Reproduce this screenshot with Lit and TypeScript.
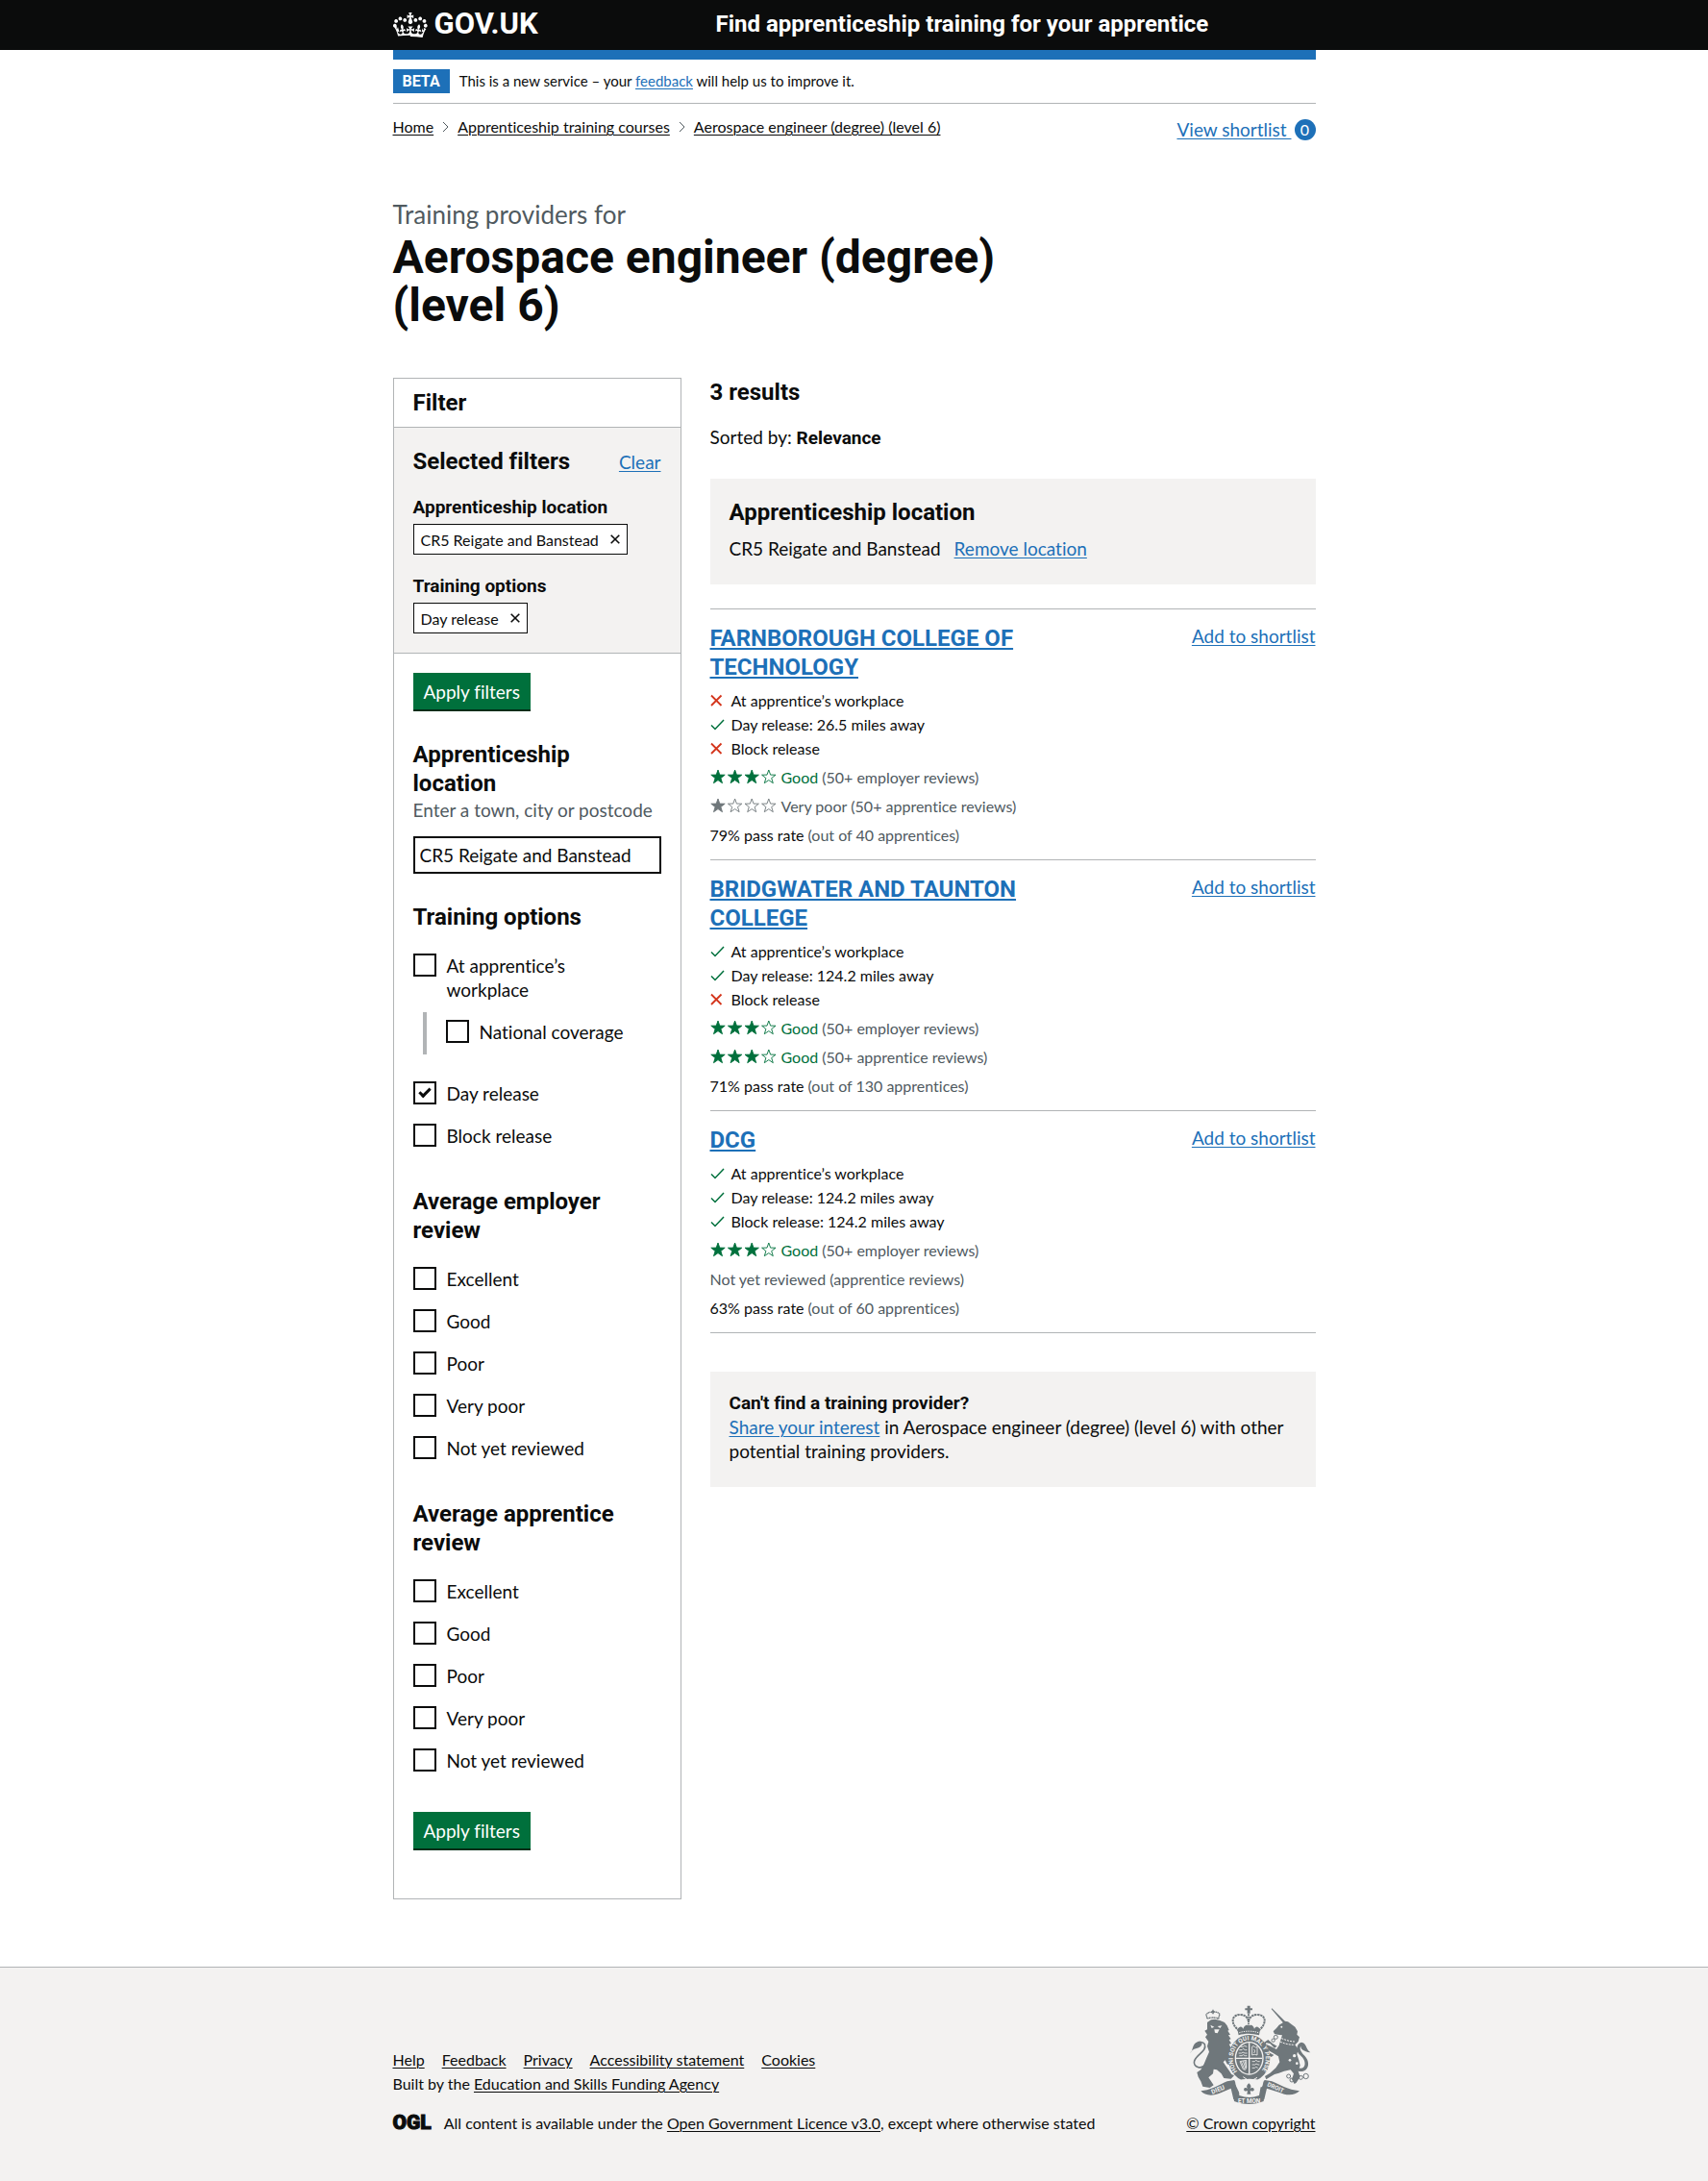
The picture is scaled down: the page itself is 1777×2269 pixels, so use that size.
import { LitElement, html, svg, css, nothing } from "lit";
import { customElement, property } from "lit/decorators.js";

const base = css`
  *,
  *::before,
  *::after {
    box-sizing: border-box;
  }
  :host {
    display: block;
    font-family: "Lato", "Liberation Sans", sans-serif;
    font-variant-ligatures: none;
    font-size: 19px;
    line-height: 25px;
    color: #0b0c0c;
  }
  h1,
  h2,
  h3,
  p,
  ul,
  ol,
  fieldset,
  legend {
    margin: 0;
    padding: 0;
    border: 0;
  }
  ul,
  ol {
    list-style: none;
  }
  a {
    color: #1d70b8;
    text-decoration: underline;
    text-decoration-thickness: 1px;
    text-underline-offset: 2px;
  }
  .heading-m,
  .heading-s {
    font-family: "Roboto", "Liberation Sans", sans-serif;
    font-weight: 700;
  }
  .heading-m {
    font-size: 24px;
    line-height: 30px;
  }
  .heading-s {
    font-size: 19px;
    line-height: 25px;
  }
  .container {
    max-width: 960px;
    margin: 0 auto;
  }
  .dark {
    color: #0b0c0c;
  }
`;

const tickIcon = svg`<path d="M1 7.5 L5 11.5 L14 2" fill="none" stroke="#00703c" stroke-width="1.5"/>`;
const crossIcon = svg`<path d="M1 1.5 L11.5 12 M11.5 1.5 L1 12" fill="none" stroke="#d4351c" stroke-width="1.8"/>`;

@customElement("site-header")
class SiteHeader extends LitElement {
  static styles = [
    base,
    css`
      .header {
        background: #0b0c0c;
        color: #fff;
        height: 52px;
        padding-top: 10px;
      }
      .row {
        display: grid;
        grid-template-columns: 35% 1fr;
      }
      .logo {
        display: flex;
        align-items: center;
        gap: 7px;
        height: 30px;
        color: #fff;
        text-decoration: none;
        font-family: "Roboto", "Liberation Sans", sans-serif;
        font-weight: 700;
        font-size: 31px;
        line-height: 30px;
      }
      .service {
        color: #fff;
        text-decoration: none;
      }
      .bar {
        height: 10px;
        background: #1d70b8;
      }
      .phase {
        display: flex;
        align-items: center;
        gap: 10px;
        padding: 10px 0;
        border-bottom: 1px solid #b1b4b6;
        font-size: 15px;
      }
      .tag {
        display: inline-block;
        background: #1d70b8;
        color: #fff;
        font-family: "Roboto", "Liberation Sans", sans-serif;
        font-weight: 700;
        font-size: 16px;
        line-height: 25px;
        padding: 0 10px;
      }
      .nav {
        display: flex;
        align-items: flex-start;
        justify-content: space-between;
        padding-top: 14px;
      }
      .crumbs {
        display: flex;
        font-size: 16px;
        line-height: 20px;
      }
      .crumbs li {
        display: flex;
        align-items: center;
      }
      .crumbs svg {
        margin: 0 9px;
      }
      .shortlist {
        display: flex;
        gap: 3px;
        align-items: center;
        text-decoration: none;
      }
      .shortlist .label {
        text-decoration: underline;
        text-decoration-thickness: 1px;
        text-underline-offset: 2px;
      }
      .count {
        width: 22px;
        height: 22px;
        border-radius: 50%;
        background: #1d70b8;
        color: #fff;
        font-size: 16px;
        line-height: 22px;
        text-align: center;
      }
    `,
  ];

  render() {
    const chevron = html`<svg width="7" height="12" viewBox="0 0 7 12" aria-hidden="true">
      <path d="M1 1 6 6 1 11" fill="none" stroke="#505a5f" />
    </svg>`;
    return html`
      <header class="header">
        <div class="container row">
          <a class="logo" href="#">
            <svg width="36" height="32" viewBox="0 0 36 32" fill="#fff" aria-hidden="true">
              <path
                d="M6.7 12.2c1 .4 2.1-.1 2.5-1s-.1-2.1-1-2.5c-1-.4-2.1.1-2.5 1-.4 1 0 2.1 1 2.5m-4.3 2.5c1 .4 2.1-.1 2.5-1 .4-1-.1-2.1-1-2.5-1-.4-2.1.1-2.5 1-.5 1 0 2.1 1 2.5m-1.3 4.8c1 .4 2.1-.1 2.5-1 .4-1-.1-2.1-1-2.5-1-.4-2.1.1-2.5 1-.4 1 0 2.1 1 2.5m10.4-5.8c1 .4 2.1-.1 2.5-1 .4-1-.1-2.1-1-2.5-1-.4-2.1.1-2.5 1s0 2.1 1 2.5m17.4-1.5c-1 .4-2.1-.1-2.5-1s.1-2.1 1-2.5c1-.4 2.1.1 2.5 1 .5 1 0 2.1-1 2.5m4.3 2.5c-1 .4-2.1-.1-2.5-1-.4-1 .1-2.1 1-2.5 1-.4 2.1.1 2.5 1 .5 1 0 2.1-1 2.5m1.3 4.8c-1 .4-2.1-.1-2.5-1-.4-1 .1-2.1 1-2.5 1-.4 2.1.1 2.5 1 .4 1 0 2.1-1 2.5m-10.4-5.8c-1 .4-2.1-.1-2.5-1s.1-2.1 1-2.5c1-.4 2.1.1 2.5 1s0 2.1-1 2.5m-5.3-4.9 2.4 1.3V6.5l-2.4.8c-.1-.1-.1-.2-.2-.3s1-3 1-3h-3.4l1 2.9c-.1.1-.2.2-.2.3l-2.4-.7v3.6L17 9l.2.2-1.4 4c-.1.2-.1.4-.1.6 0 1.1.8 2 1.9 2.2h.7c1-.2 1.9-1.1 1.9-2.1 0-.2 0-.4-.1-.6l-1.4-4c-.1-.2 0-.3.1-.5m-1 20.3c4.6 0 8.9.3 12.8.9 1.1-4.6 2.4-7.2 3.8-9.1l-2.6-.9c.3 1.3.3 1.9 0 2.8-.4-.4-.8-1.2-1.1-2.4l-1.2 4.2c.8-.5 1.4-.9 2-.9-1.2 2.6-2.7 3.2-3.6 3-1.2-.2-1.7-1.3-1.5-2.2.3-1.3 1.6-1.6 2.2-.1 1.2-2.4-.8-3.1-2.1-2.4 1.9-1.9 2.2-3.6.6-5.7-2.2 1.7-2.2 3.3-1.2 5.6-1.3-1.5-3.3-.7-2.5 1.7.9-1.4 2.1-.5 2 .8-.2 1.2-1.7 2.1-3.7 1.9-2.8-.2-3-2.2-3-3.8.7-.1 1.9.5 3 2l.4-4.4c-1.1 1.2-2.3 1.4-3.5 1.4.4-1.2 2.1-3.1 2.1-3.1h-5.4s1.8 1.9 2.1 3.1c-1.2 0-2.4-.2-3.5-1.4l.4 4.4c1.1-1.5 2.3-2.1 3-2-.1 1.6-.2 3.6-3 3.8-2 .2-3.5-.7-3.7-1.9-.1-1.3 1.1-2.2 2-.8.8-2.4-1.3-3.2-2.5-1.7 1-2.3 1-3.9-1.2-5.6-1.6 2-1.3 3.8.6 5.7-1.3-.7-3.2 0-2.1 2.4.6-1.5 1.9-1.1 2.2.1.2.9-.4 1.9-1.5 2.2-1 .2-2.5-.5-3.6-3 .6 0 1.2.4 2 .9L5 19c-.4 1.1-.7 1.9-1.1 2.4-.3-.9-.2-1.4 0-2.8l-2.6.9C2.7 21.4 4 24 5.1 28.6c4-.6 8.2-.9 12.8-.9"
              />
            </svg>
            <span>GOV.UK</span>
          </a>
          <a class="service heading-m" href="#">Find apprenticeship training for your apprentice</a>
        </div>
      </header>
      <div class="container">
        <div class="bar"></div>
        <div class="phase">
          <strong class="tag">BETA</strong>
          <span>This is a new service – your <a href="#">feedback</a> will help us to improve it.</span>
        </div>
        <nav class="nav" aria-label="Breadcrumb">
          <ol class="crumbs">
            <li><a class="dark" href="#">Home</a></li>
            <li>${chevron}<a class="dark" href="#">Apprenticeship training courses</a></li>
            <li>${chevron}<a class="dark" href="#">Aerospace engineer (degree) (level 6)</a></li>
          </ol>
          <a class="shortlist" href="#"><span class="label">View shortlist&nbsp;</span><span class="count">0</span></a>
        </nav>
      </div>
    `;
  }
}

interface Option {
  label: string;
  checked?: boolean;
  children?: Option[];
}

const ratings: Option[] = ["Excellent", "Good", "Poor", "Very poor", "Not yet reviewed"].map((label) => ({ label }));

const groups: { name: string; title: string; options: Option[] }[] = [
  {
    name: "training",
    title: "Training options",
    options: [
      { label: "At apprentice’s workplace", children: [{ label: "National coverage" }] },
      { label: "Day release", checked: true },
      { label: "Block release" },
    ],
  },
  { name: "employer", title: "Average employer review", options: ratings },
  { name: "apprentice", title: "Average apprentice review", options: ratings },
];

@customElement("filter-panel")
class FilterPanel extends LitElement {
  static styles = [
    base,
    css`
      .panel {
        border: 1px solid #b1b4b6;
      }
      .title {
        padding: 10px 20px;
      }
      .selected {
        display: flex;
        flex-direction: column;
        gap: 20px;
        padding: 20px;
        background: #f3f2f1;
        border-top: 1px solid #b1b4b6;
        border-bottom: 1px solid #b1b4b6;
      }
      .selected-head {
        display: flex;
        justify-content: space-between;
        align-items: baseline;
      }
      .chip {
        display: inline-flex;
        align-items: center;
        gap: 12px;
        height: 32px;
        margin-top: 5px;
        padding: 0 7px;
        border: 1px solid #0b0c0c;
        background: #fff;
        color: #0b0c0c;
        font-size: 16px;
        text-decoration: none;
      }
      .form {
        display: flex;
        flex-direction: column;
        align-items: flex-start;
        gap: 30px;
        padding: 20px 20px 50px;
      }
      .button {
        height: 38px;
        margin-bottom: 2px;
        padding: 0 11px;
        border: 0;
        background: #00703c;
        box-shadow: 0 2px 0 #002d18;
        color: #fff;
        font: inherit;
      }
      .field {
        align-self: stretch;
      }
      .hint {
        color: #505a5f;
        margin-bottom: 15px;
      }
      .text {
        display: block;
        width: 100%;
        height: 39px;
        padding: 5px;
        border: 2px solid #0b0c0c;
        border-radius: 0;
        font: inherit;
        color: inherit;
      }
      .legend {
        display: block;
        padding-right: 20px;
      }
      .options {
        padding-top: 15px;
      }
      .item {
        display: flex;
        align-items: flex-start;
        gap: 11px;
        padding: 8px 20px 7px 0;
        margin-bottom: 4px;
      }
      .box {
        appearance: none;
        flex: none;
        display: grid;
        place-items: center;
        width: 24px;
        height: 24px;
        margin: 0;
        border: 2px solid #0b0c0c;
        background: #fff;
      }
      .box:checked::before {
        content: "";
        width: 12px;
        height: 7px;
        margin-bottom: 4px;
        border: solid #0b0c0c;
        border-width: 0 0 3px 3px;
        rotate: -45deg;
      }
      .nested {
        margin: 0 0 20px 10px;
        padding-left: 20px;
        border-left: 4px solid #b1b4b6;
      }
      .nested .item {
        margin: 0;
        padding-bottom: 11px;
      }
    `,
  ];

  private option(group: string, o: Option): unknown {
    const id = `${group}-${o.label.toLowerCase().replace(/[^a-z]+/g, "-")}`;
    return html`
      <div class="item">
        <input class="box" type="checkbox" id=${id} ?checked=${o.checked} />
        <label for=${id}>${o.label}</label>
      </div>
      ${o.children ? html`<div class="nested">${o.children.map((c) => this.option(group, c))}</div>` : nothing}
    `;
  }

  private chip(title: string, value: string) {
    return html`<div>
      <h3 class="heading-s">${title}</h3>
      <a class="chip" href="#"
        >${value}<svg width="10" height="10" viewBox="0 0 10 10" aria-hidden="true">
          <path d="M.7 .7 9.3 9.3M9.3 .7 .7 9.3" stroke="#0b0c0c" stroke-width="1.6" /></svg
      ></a>
    </div>`;
  }

  render() {
    return html`
      <div class="panel">
        <h2 class="heading-m title">Filter</h2>
        <div class="selected">
          <div class="selected-head">
            <h2 class="heading-m">Selected filters</h2>
            <a href="#">Clear</a>
          </div>
          ${this.chip("Apprenticeship location", "CR5 Reigate and Banstead")}
          ${this.chip("Training options", "Day release")}
        </div>
        <form class="form">
          <button class="button" type="button">Apply filters</button>
          <div class="field">
            <label class="heading-m legend" for="location">Apprenticeship location</label>
            <p class="hint" id="hint">Enter a town, city or postcode</p>
            <input class="text" id="location" type="text" aria-describedby="hint" value="CR5 Reigate and Banstead" />
          </div>
          ${groups.map(
            (g) => html`<fieldset class="field">
              <legend class="heading-m legend">${g.title}</legend>
              <div class="options">${g.options.map((o) => this.option(g.name, o))}</div>
            </fieldset>`,
          )}
          <button class="button" type="button">Apply filters</button>
        </form>
      </div>
    `;
  }
}

interface Review {
  stars: number;
  text: string;
  by: string;
}
interface Provider {
  name: string;
  options: { ok: boolean; text: string }[];
  reviews: Review[];
  rate: string;
  outOf: number;
}

const employer: Review = { stars: 3, text: "Good", by: "employer" };
const providers: Provider[] = [
  {
    name: "FARNBOROUGH COLLEGE OF TECHNOLOGY",
    options: [
      { ok: false, text: "At apprentice’s workplace" },
      { ok: true, text: "Day release: 26.5 miles away" },
      { ok: false, text: "Block release" },
    ],
    reviews: [employer, { stars: 1, text: "Very poor", by: "apprentice" }],
    rate: "79%",
    outOf: 40,
  },
  {
    name: "BRIDGWATER AND TAUNTON COLLEGE",
    options: [
      { ok: true, text: "At apprentice’s workplace" },
      { ok: true, text: "Day release: 124.2 miles away" },
      { ok: false, text: "Block release" },
    ],
    reviews: [employer, { stars: 3, text: "Good", by: "apprentice" }],
    rate: "71%",
    outOf: 130,
  },
  {
    name: "DCG",
    options: [
      { ok: true, text: "At apprentice’s workplace" },
      { ok: true, text: "Day release: 124.2 miles away" },
      { ok: true, text: "Block release: 124.2 miles away" },
    ],
    reviews: [employer, { stars: 0, text: "Not yet reviewed", by: "apprentice" }],
    rate: "63%",
    outOf: 60,
  },
];

@customElement("provider-card")
class ProviderCard extends LitElement {
  @property({ attribute: false }) provider!: Provider;

  static styles = [
    base,
    css`
      .card {
        display: grid;
        grid-template-columns: 2fr 1fr;
        border-top: 1px solid #b1b4b6;
        padding: 15px 0 13px;
        font-size: 16px;
      }
      .name a {
        text-decoration-thickness: 2px;
      }
      .options {
        padding-top: 7px;
      }
      .options li {
        display: flex;
        align-items: center;
        gap: 7px;
      }
      .review {
        display: flex;
        align-items: center;
        margin-top: 5px;
        gap: 4px;
        color: #505a5f;
      }
      .good {
        color: #00703c;
      }
      .black {
        color: #0b0c0c;
      }
      .stars {
        margin-right: 1px;
      }
      .add {
        justify-self: end;
        align-self: start;
        font-size: 19px;
      }
    `,
  ];

  private stars(n: number) {
    const color = n > 2 ? "#00703c" : "#6f777b";
    return html`<svg class="stars" width="69" height="17" viewBox="0 0 69 17" aria-hidden="true">
      ${[0, 1, 2, 3].map(
        (i) =>
          svg`<path transform="translate(${i * 17.6} 0)" d="M8 1 9.8 6.1 15.2 6.2 10.9 9.5 12.5 14.7 8 11.6 3.5 14.7 5.1 9.5 .8 6.2 6.2 6.1Z" fill=${i < n ? color : "none"} stroke=${color} stroke-width=".9"/>`,
      )}
    </svg>`;
  }

  render() {
    const p = this.provider;
    return html`
      <article class="card">
        <div>
          <h2 class="heading-m name"><a href="#">${p.name}</a></h2>
          <ul class="options">
            ${p.options.map(
              (o) => html`<li>
                <svg width="15" height="14" viewBox="0 0 15 14" aria-hidden="true">${o.ok ? tickIcon : crossIcon}</svg>
                ${o.text}
              </li>`,
            )}
          </ul>
          ${p.reviews.map((r) =>
            r.stars
              ? html`<p class="review">
                  ${this.stars(r.stars)}<span class=${r.stars > 2 ? "good" : ""}>${r.text}</span>
                  <span>(50+ ${r.by} reviews)</span>
                </p>`
              : html`<p class="review">${r.text} (${r.by} reviews)</p>`,
          )}
          <p class="review"><span class="black">${p.rate} pass rate</span> <span>(out of ${p.outOf} apprentices)</span></p>
        </div>
        <a class="add" href="#">Add to shortlist</a>
      </article>
    `;
  }
}

@customElement("site-footer")
class SiteFooter extends LitElement {
  static styles = [
    base,
    css`
      .footer {
        background: #f3f2f1;
        border-top: 1px solid #b1b4b6;
        padding: 35px 0 48px;
        font-size: 16px;
      }
      .row {
        display: flex;
        justify-content: space-between;
        align-items: flex-end;
      }
      .links {
        display: flex;
        gap: 18px;
      }
      .licence {
        display: flex;
        gap: 13px;
        margin-top: 16px;
      }
      .ogl {
        font-family: "Roboto", "Liberation Sans", sans-serif;
        font-weight: 900;
        font-size: 21px;
        -webkit-text-stroke: 1px #0b0c0c;
      }
      .crown {
        display: flex;
        flex-direction: column;
        align-items: center;
        gap: 4px;
      }
    `,
  ];

  private arms() {
    const c = "#6f777b";
    const bg = "#f3f2f1";
    return html`<svg width="134" height="110" viewBox="0 0 402 330" fill=${c} aria-hidden="true">
      <!-- lion with tail and crown -->
      <path d="M66 66 L78 58 90 56 106 60 120 66 128 76 134 90 130 92 138 104 132 106 140 118 134 120 141 132 134 134 143 150 149 168 138 184 138 200 128 196 122 184 116 190 124 202 134 216 142 228 150 232 140 242 118 240 110 226 96 214 86 212 84 226 70 238 78 250 86 262 74 270 52 266 46 250 38 236 34 222 46 214 56 196 64 176 72 158 66 140 70 126 60 112 66 104 58 92 66 88Z" />
      <path d="M76 74 88 80 80 84ZM98 78 112 76 106 84ZM88 88 104 88 98 100 90 98Z" fill=${bg} />
      <path d="M62 196C48 216 20 204 26 186C34 164 66 156 58 134C52 124 36 126 32 136" fill="none" stroke=${c} stroke-width="5" />
      <path d="M12 162C22 156 18 140 30 130C44 118 56 130 46 140C40 148 22 144 12 162Z" />
      <path d="M66 54 63 42C68 34 76 32 84 36C92 30 102 36 105 40L101 54C90 50 78 50 66 54Z" fill="none" stroke=${c} stroke-width="4" stroke-dasharray="4 1" />
      <path d="M82 26h4v14h-4zM79 30h10v3h-10z" />
      <!-- unicorn with horn, mane and chain -->
      <path d="M268 22 310 64 304 68 266 24Z" />
      <path d="M300 68 308 62 318 64 326 70 340 80 348 94 346 104 354 112 350 126 340 136 350 150 346 166 352 184 356 200 350 218 356 236 344 254 338 258 330 244 336 226 326 214 306 218 290 224 276 228 262 236 250 244 246 234 262 224 280 208 292 190 288 172 272 162 258 154 248 142 250 134 266 142 282 150 290 138 296 118 300 106 286 104 276 102 272 94 282 84 290 74Z" />
      <path d="M262 132 250 130 248 138 244 128 256 120 270 132 284 140 276 146ZM266 174 254 168 246 174 242 166 256 158 274 168Z" />
      <path d="M346 206C372 220 380 188 358 170C340 156 344 132 360 128C376 130 372 146 388 160C366 156 358 150 358 140C352 148 360 160 370 170C394 196 376 226 350 218Z" />
      <circle cx="298" cy="80" r="3" fill=${bg} />
      <path d="M290 112 C306 120 324 126 340 126 M286 122C302 132 322 136 338 136" fill="none" stroke=${bg} stroke-width="3" stroke-dasharray="6 3" />
      <g fill=${bg}><circle cx="338" cy="170" r="5" /><circle cx="324" cy="184" r="4" /><circle cx="346" cy="194" r="4" /></g>
      <g fill="none" stroke=${c} stroke-width="3">
        <circle cx="320" cy="234" r="6" /><circle cx="330" cy="246" r="6" /><circle cx="358" cy="238" r="6" />
        <circle cx="374" cy="234" r="8" /><circle cx="280" cy="112" r="6" /><circle cx="272" cy="122" r="5" />
      </g>
      <!-- imperial crown -->
      <g fill="none" stroke=${c} stroke-width="6">
        <path d="M166 92C138 72 140 42 168 42C188 42 192 54 195 62C198 54 202 42 222 42C252 42 252 72 226 92" stroke-dasharray="7 2" />
        <path d="M195 40V86" stroke-dasharray="5 2" />
      </g>
      <path d="M191 14h9v8h7v6h-7v10h-9V28h-7v-6h7z" />
      <path d="M160 88C168 76 174 78 178 86C184 72 192 72 195 80C200 72 208 72 213 86C218 78 224 76 231 88L228 106C206 100 184 100 164 106Z" />
      <path d="M166 98C184 92 208 92 226 98" stroke=${bg} stroke-width="3" stroke-dasharray="4 3" fill="none" />
      <!-- garter and shield -->
      <ellipse cx="197" cy="178" rx="65" ry="73" />
      <ellipse cx="197" cy="178" rx="45" ry="52" fill=${bg} />
      <ellipse cx="197" cy="178" rx="41" ry="48" />
      <path d="M197 130V226M156 178H238" stroke=${bg} stroke-width="4" />
      <g fill="none" stroke=${bg} stroke-width="2.5">
        <path d="M166 152h8l4-4 6 4h6M164 162h9l4-3 6 3h8M170 142h8l4-3 8 3M166 170h8l4-3 6 3h6" />
        <path d="M206 142q4-5 8 0t8 0v26q-8-4-16 0zM212 150q6 5 0 12" />
        <path d="M168 188 188 184V208Q186 218 178 212ZM172 188 182 212M178 187 186 210M183 186 188 206" />
        <path d="M206 188h8l4-4 6 4h6M206 198h9l4-3 6 3h4M206 208h8l4-3 6 3" />
      </g>
      <path id="garter" d="M160 219A51 58 0 1 1 236 217" fill="none" />
      <text font-family="Roboto, sans-serif" font-weight="700" font-size="19" fill=${bg}>
        <textPath href="#garter">HONI SOIT QUI MAL Y PENSE</textPath>
      </text>
      <path d="M178 236 190 244M208 246 222 238" stroke=${bg} stroke-width="3" />
      <!-- motto ribbon -->
      <path d="M46 280C80 276 100 262 128 250L150 246C156 252 152 262 160 268L236 268C242 262 238 250 246 246L268 250C296 262 316 276 354 280C338 296 312 294 290 284L252 272L244 306C214 322 180 322 148 306L140 272L108 286C84 296 60 296 46 280Z" />
      <path d="M158 250C176 240 220 240 236 250L228 294C206 302 188 302 166 294C168 276 150 270 158 250Z" fill=${bg} />
      <path d="M148 292C180 306 214 306 244 292L242 312C214 324 178 324 150 312Z" />
      <path d="M196 256C206 264 202 270 199 274C206 266 214 270 212 278C208 282 202 280 200 280L202 290H190L192 280C190 280 184 282 181 278C178 270 186 266 193 274C190 270 186 264 196 256Z" />
      <g font-family="Roboto, sans-serif" font-weight="700" fill=${bg}>
        <text x="82" y="290" font-size="20" transform="rotate(-22 82 290)">DIEU</text>
        <text x="162" y="318" font-size="19">ET MON</text>
        <text x="252" y="264" font-size="19" transform="rotate(24 252 264)">DROIT</text>
      </g>
    </svg>`;
  }

  render() {
    return html`
      <footer class="footer">
        <div class="container row">
          <div>
            <ul class="links">
              ${["Help", "Feedback", "Privacy", "Accessibility statement", "Cookies"].map(
                (t) => html`<li><a class="dark" href="#">${t}</a></li>`,
              )}
            </ul>
            <p>Built by the <a class="dark" href="#">Education and Skills Funding Agency</a></p>
            <p class="licence">
              <span class="ogl">OGL</span>
              <span>All content is available under the <a class="dark" href="#">Open Government Licence v3.0</a>, except where otherwise stated</span>
            </p>
          </div>
          <div class="crown">${this.arms()}<a class="dark" href="#">© Crown copyright</a></div>
        </div>
      </footer>
    `;
  }
}

@customElement("app-root")
class AppRoot extends LitElement {
  static styles = [
    base,
    css`
      :host {
        background: #fff;
      }
      .intro {
        max-width: 640px;
        margin-top: 61px;
        margin-bottom: 50px;
      }
      .caption {
        display: block;
        margin-bottom: 5px;
        color: #505a5f;
        font-size: 26px;
        line-height: 30px;
      }
      .title {
        font-family: "Roboto", "Liberation Sans", sans-serif;
        font-weight: 700;
        font-size: 48px;
        line-height: 50px;
      }
      .columns {
        display: grid;
        grid-template-columns: 300px 1fr;
        gap: 30px;
        align-items: start;
        margin-bottom: 70px;
      }
      .sorted {
        margin: 19px 0 30px;
      }
      .inset {
        background: #f3f2f1;
        padding: 20px 20px 25px;
      }
      .location {
        display: flex;
        gap: 14px;
        margin-top: 10px;
      }
      .list {
        margin: 25px 0 40px;
        border-bottom: 1px solid #b1b4b6;
      }
    `,
  ];

  render() {
    return html`
      <site-header></site-header>
      <main class="container">
        <div class="intro">
          <span class="caption">Training providers for</span>
          <h1 class="title">Aerospace engineer (degree) (level 6)</h1>
        </div>
        <div class="columns">
          <filter-panel></filter-panel>
          <section>
            <h2 class="heading-m">3 results</h2>
            <p class="sorted">Sorted by: <strong class="heading-s">Relevance</strong></p>
            <div class="inset">
              <h2 class="heading-m">Apprenticeship location</h2>
              <p class="location"><span>CR5 Reigate and Banstead</span><a href="#">Remove location</a></p>
            </div>
            <div class="list">${providers.map((p) => html`<provider-card .provider=${p}></provider-card>`)}</div>
            <div class="inset">
              <h3 class="heading-s">Can't find a training provider?</h3>
              <p><a href="#">Share your interest</a> in Aerospace engineer (degree) (level 6) with other potential training providers.</p>
            </div>
          </section>
        </div>
      </main>
      <site-footer></site-footer>
    `;
  }
}
